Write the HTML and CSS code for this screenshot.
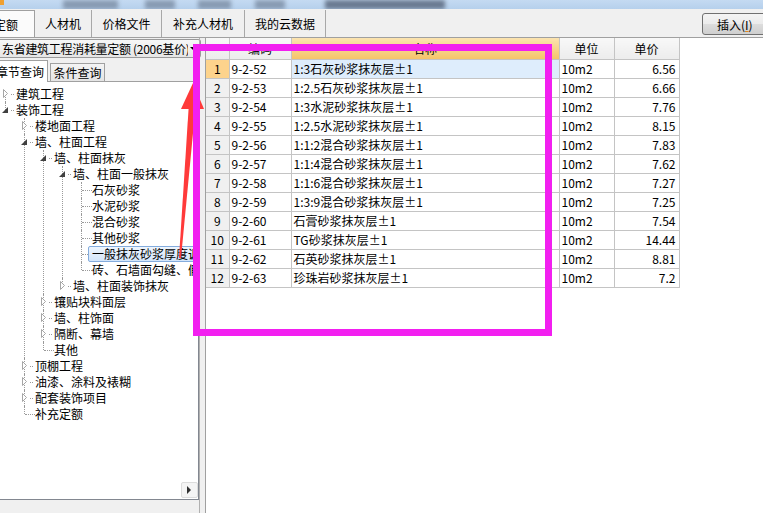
FILE: index.html
```html
<!DOCTYPE html>
<html lang="zh-CN">
<head>
  <meta charset="UTF-8">
  <title>定额查询</title>
  <link rel="stylesheet" href="styles.css">
</head>
<body>

  <div class="titlebar">
    <span class="app-icon"></span>
    <span class="blur b1"></span>
    <span class="blur b2"></span>
    <span class="blur b3"></span>
    <span class="blur b4"></span>
    <span class="blur b5"></span>
  </div>

  <div class="toolbar">
    <div class="tabs">
      <div class="tab active"><span class="cut">定额</span></div>
      <div class="tab w57">人材机</div>
      <div class="tab w70">价格文件</div>
      <div class="tab w83">补充人材机</div>
      <div class="tab w81">我的云数据</div>
    </div>
    <button class="insert-btn">插入(<u>I</u>)</button>
  </div>

  <div class="main">
    <div class="left">
      <div class="combo">
        <span class="combo-text">东省建筑工程消耗量定额 (2006基价)</span>
        <span class="combo-arrow"></span>
      </div>

      <div class="query-tabs">
        <div class="qtab active">章节查询</div>
        <div class="qtab">条件查询</div>
      </div>

      <div class="tree-box">
        <ul class="tree">
          <li><div class="node"><span class="twisty closed"></span><span class="dot"></span><span class="label">建筑工程</span></div></li>
          <li><div class="node"><span class="twisty open"></span><span class="dot"></span><span class="label">装饰工程</span></div>
            <ul>
              <li><div class="node"><span class="twisty closed"></span><span class="dot"></span><span class="label">楼地面工程</span></div></li>
              <li><div class="node"><span class="twisty open"></span><span class="dot"></span><span class="label">墙、柱面工程</span></div>
                <ul>
                  <li><div class="node"><span class="twisty open"></span><span class="dot"></span><span class="label">墙、柱面抹灰</span></div>
                    <ul>
                      <li><div class="node"><span class="twisty open"></span><span class="dot"></span><span class="label">墙、柱面一般抹灰</span></div>
                        <ul>
                          <li><div class="node leaf"><span class="hline"></span><span class="label">石灰砂浆</span></div></li>
                          <li><div class="node leaf"><span class="hline"></span><span class="label">水泥砂浆</span></div></li>
                          <li><div class="node leaf"><span class="hline"></span><span class="label">混合砂浆</span></div></li>
                          <li><div class="node leaf"><span class="hline"></span><span class="label">其他砂浆</span></div></li>
                          <li><div class="node leaf"><span class="hline"></span><span class="label selected">一般抹灰砂浆厚度调整</span></div></li>
                          <li><div class="node leaf"><span class="hline"></span><span class="label">砖、石墙面勾缝、假面砖</span></div></li>
                        </ul>
                      </li>
                      <li><div class="node"><span class="twisty closed"></span><span class="dot"></span><span class="label">墙、柱面装饰抹灰</span></div></li>
                    </ul>
                  </li>
                  <li><div class="node"><span class="twisty closed"></span><span class="dot"></span><span class="label">镶贴块料面层</span></div></li>
                  <li><div class="node"><span class="twisty closed"></span><span class="dot"></span><span class="label">墙、柱饰面</span></div></li>
                  <li><div class="node"><span class="twisty closed"></span><span class="dot"></span><span class="label">隔断、幕墙</span></div></li>
                  <li><div class="node leaf"><span class="hline"></span><span class="label">其他</span></div></li>
                </ul>
              </li>
              <li><div class="node"><span class="twisty closed"></span><span class="dot"></span><span class="label">顶棚工程</span></div></li>
              <li><div class="node"><span class="twisty closed"></span><span class="dot"></span><span class="label">油漆、涂料及裱糊</span></div></li>
              <li><div class="node"><span class="twisty closed"></span><span class="dot"></span><span class="label">配套装饰项目</span></div></li>
              <li><div class="node leaf"><span class="hline"></span><span class="label">补充定额</span></div></li>
            </ul>
          </li>
        </ul>
        <div class="hscroll"><span class="hscroll-btn"></span></div>
      </div>
    </div>

    <div class="splitter"></div>

    <div class="right">
      <table class="grid">
        <colgroup>
          <col class="c-no"><col class="c-code"><col class="c-name"><col class="c-unit"><col class="c-price">
        </colgroup>
        <thead>
          <tr><th></th><th>编码</th><th class="hl">名称</th><th>单位</th><th>单价</th></tr>
        </thead>
        <tbody>
          <tr class="current"><td class="no">1</td><td>9-2-52</td><td class="name">1:3石灰砂浆抹灰层±1</td><td>10m2</td><td class="num">6.56</td></tr>
          <tr><td class="no">2</td><td>9-2-53</td><td>1:2.5石灰砂浆抹灰层±1</td><td>10m2</td><td class="num">6.66</td></tr>
          <tr><td class="no">3</td><td>9-2-54</td><td>1:3水泥砂浆抹灰层±1</td><td>10m2</td><td class="num">7.76</td></tr>
          <tr><td class="no">4</td><td>9-2-55</td><td>1:2.5水泥砂浆抹灰层±1</td><td>10m2</td><td class="num">8.15</td></tr>
          <tr><td class="no">5</td><td>9-2-56</td><td>1:1:2混合砂浆抹灰层±1</td><td>10m2</td><td class="num">7.83</td></tr>
          <tr><td class="no">6</td><td>9-2-57</td><td>1:1:4混合砂浆抹灰层±1</td><td>10m2</td><td class="num">7.62</td></tr>
          <tr><td class="no">7</td><td>9-2-58</td><td>1:1:6混合砂浆抹灰层±1</td><td>10m2</td><td class="num">7.27</td></tr>
          <tr><td class="no">8</td><td>9-2-59</td><td>1:3:9混合砂浆抹灰层±1</td><td>10m2</td><td class="num">7.25</td></tr>
          <tr><td class="no">9</td><td>9-2-60</td><td>石膏砂浆抹灰层±1</td><td>10m2</td><td class="num">7.54</td></tr>
          <tr><td class="no">10</td><td>9-2-61</td><td>TG砂浆抹灰层±1</td><td>10m2</td><td class="num">14.44</td></tr>
          <tr><td class="no">11</td><td>9-2-62</td><td>石英砂浆抹灰层±1</td><td>10m2</td><td class="num">8.81</td></tr>
          <tr><td class="no">12</td><td>9-2-63</td><td>珍珠岩砂浆抹灰层±1</td><td>10m2</td><td class="num">7.2</td></tr>
        </tbody>
      </table>
    </div>
  </div>

  <!-- annotation drawn over the screenshot -->
  <svg class="markup" width="763" height="513" viewBox="0 0 763 513">
    <polygon points="189,102 196,102 181,258 179,258" fill="#ff3a3a"/>
    <polygon points="193,83 181,109 204,109" fill="#ff3a3a"/>
    <rect x="196.5" y="47.5" width="352" height="285" fill="none" stroke="#f21ff0" stroke-width="7"/>
  </svg>

</body>
</html>
```

FILE: styles.css
```css
* {
  margin: 0;
  padding: 0;
  box-sizing: border-box;
}

body {
  position: relative;
  width: 763px;
  height: 513px;
  overflow: hidden;
  background-color: #f0f0f0;
  font-family: "Noto Sans CJK SC", "Liberation Sans", sans-serif;
  font-size: 12px;
  color: #000;
}

/* window caption, blurred */
.titlebar {
  display: flex;
  height: 9px;
  background: linear-gradient(#c4daf2, #b6d0ec);
  overflow: hidden;
}

.app-icon {
  width: 4px;
  height: 5px;
  background-color: #f0a030;
}

.blur {
  height: 9px;
  background-color: rgba(70, 85, 105, 0.45);
  filter: blur(2px);
}

.b1 { width: 55px; margin-left: 59px; }
.b2 { width: 30px; margin-left: 27px; }
.b3 { width: 33px; margin-left: 23px; }
.b4 { width: 30px; margin-left: 24px; }
.b5 { width: 120px; margin-left: 40px; background-color: rgba(50, 60, 80, 0.6); }

/* tab strip */
.toolbar {
  display: flex;
  justify-content: space-between;
  height: 29px;
  padding-top: 1px;
  border-bottom: 1px solid #a0a0a0;
}

.tabs {
  display: flex;
}

.tab {
  display: flex;
  align-items: center;
  justify-content: center;
  height: 27px;
  border-right: 1px solid #a8a8a8;
  white-space: nowrap;
  font-size: 12px;
}

.tab.active {
  width: 35px;
  justify-content: flex-start;
  overflow: hidden;
  background-color: #fbfbfb;
  border: 1px solid #a0a0a0;
  border-left: none;
  border-bottom: none;
}

.tab .cut {
  margin-left: -6px;
}

.w57 { width: 57px; }
.w70 { width: 70px; }
.w83 { width: 83px; }
.w81 { width: 81px; }

.insert-btn {
  width: 64px;
  height: 22px;
  margin-top: 3px;
  margin-right: -3px;
  padding-left: 14px;
  text-align: left;
  border: 1px solid #707070;
  border-radius: 3px;
  background: linear-gradient(#f4f4f4 0%, #ebebeb 50%, #dddddd 51%, #cfcfcf 100%);
  font-family: inherit;
  font-size: 12px;
  color: #000;
}

.insert-btn u {
  text-decoration-color: #e08a20;
}

/* body */
.main {
  display: flex;
  height: 475px;
}

.left {
  display: flex;
  flex-direction: column;
  width: 199px;
  flex: none;
  padding-bottom: 13px;
}

.combo {
  display: flex;
  align-items: center;
  justify-content: space-between;
  height: 19px;
  margin-top: 1px;
  margin-right: -2px;
  padding: 0 4px 0 2px;
  border: 1px solid #9a9a9a;
  border-left: none;
  border-radius: 0 3px 3px 0;
  background: linear-gradient(#f7f7f7, #e6e6e6);
  overflow: hidden;
}

.combo-text {
  white-space: nowrap;
  overflow: hidden;
  letter-spacing: -0.3px;
}

.combo-arrow {
  flex: none;
  width: 0;
  height: 0;
  margin-left: 2px;
  border-left: 3px solid transparent;
  border-right: 3px solid transparent;
  border-top: 3px solid #000;
}

.query-tabs {
  display: flex;
  align-items: flex-end;
  height: 22px;
  margin-top: 1px;
}

.qtab {
  display: flex;
  align-items: center;
  justify-content: center;
  height: 18px;
  width: 55px;
  margin-left: 2px;
  border: 1px solid #a0a0a0;
  border-bottom: none;
  background: linear-gradient(#f4f4f4, #e4e4e4);
  white-space: nowrap;
}

.qtab.active {
  width: 56px;
  height: 22px;
  margin-left: -8px;
  margin-bottom: -1px;
  background-color: #fff;
  background-image: none;
  position: relative;
  align-items: flex-start;
  padding-top: 2px;
}

.tree-box {
  display: flex;
  flex-direction: column;
  flex: 1;
  background-color: #fff;
  border-top: 1px solid #a0a0a0;
  border-right: 1px solid #828790;
  border-bottom: 1px solid #828790;
  overflow: hidden;
}

.tree {
  flex: 1;
  padding-top: 4px;
  overflow: hidden;
}

.tree,
.tree ul {
  list-style: none;
}

.tree ul {
  padding-left: 19px;
}

.tree li {
  position: relative;
}

.tree li::before {
  content: "";
  position: absolute;
  left: 5px;
  top: 0;
  bottom: 0;
  border-left: 1px dotted #9a9a9a;
}

.tree li:last-child::before {
  bottom: auto;
  height: 8px;
}

.tree > li:first-child::before {
  top: 8px;
}

.node {
  position: relative;
  display: flex;
  align-items: center;
  height: 16px;
  white-space: nowrap;
}

.twisty {
  position: relative;
  z-index: 1;
  flex: none;
  width: 11px;
  height: 16px;
  background-repeat: no-repeat;
}

.twisty.closed {
  background-image: url("data:image/svg+xml,%3Csvg xmlns='http://www.w3.org/2000/svg' width='11' height='16'%3E%3Cpath d='M3.5 3.5 L7.5 7.5 L3.5 11.5 Z' fill='%23fff' stroke='%23a6a6a6'/%3E%3C/svg%3E");
}

.twisty.open {
  background-image: url("data:image/svg+xml,%3Csvg xmlns='http://www.w3.org/2000/svg' width='11' height='16'%3E%3Cpath d='M8 5 L8 11 L2 11 Z' fill='%23404040'/%3E%3C/svg%3E");
}

.dot {
  flex: none;
  width: 3px;
  margin-right: 2px;
  border-top: 1px dotted #9a9a9a;
}

.hline {
  flex: none;
  width: 10px;
  margin-left: 6px;
  border-top: 1px dotted #9a9a9a;
}

.label {
  line-height: 16px;
}

.label.selected {
  margin-left: -4px;
  padding: 0 3px;
  border: 1px solid #84acdd;
  border-radius: 2px;
  background: linear-gradient(#eef5fd, #d3e5fa);
  line-height: 14px;
}

.hscroll {
  display: flex;
  justify-content: flex-end;
  height: 17px;
  background-color: #fff;
}

.hscroll-btn {
  width: 17px;
  height: 16px;
  border: 1px solid #dcdcdc;
  border-radius: 2px;
  background: #f4f4f4 url("data:image/svg+xml,%3Csvg xmlns='http://www.w3.org/2000/svg' width='15' height='14'%3E%3Cpath d='M5 3 L9 7 L5 11 Z' fill='%23303030'/%3E%3C/svg%3E") no-repeat;
}

.splitter {
  width: 6px;
  flex: none;
  border-left: 1px solid #b0b0b0;
}

.right {
  flex: 1;
  background-color: #fff;
  border-left: 1px solid #a0a0a0;
}

/* data grid */
.grid {
  table-layout: fixed;
  border-collapse: collapse;
  width: 473px;
}

.c-no { width: 23px; }
.c-code { width: 62px; }
.c-name { width: 268px; }
.c-unit { width: 55px; }
.c-price { width: 65px; }

.grid th {
  height: 21px;
  padding: 0;
  border: 1px solid #c4c4c4;
  border-top: none;
  background: linear-gradient(#f8f8f8, #ececec);
  font-weight: normal;
  font-size: 12px;
  text-align: center;
}

.grid th:first-child {
  border-left: none;
}

.grid th.hl {
  background: linear-gradient(#fbe3b0, #f5c46a);
}

.grid td {
  height: 19px;
  padding: 0 0 0 2px;
  border: 1px solid #c4c4c4;
  line-height: 17px;
  white-space: nowrap;
  overflow: hidden;
}

.grid td.no {
  padding: 0;
  border-left: none;
  text-align: center;
  background-color: #f0f0f0;
}

.grid td.num {
  padding: 0 3px 0 0;
  text-align: right;
}

.grid tr.current td.no {
  background-color: #fdd38c;
}

.grid tr.current td.name {
  background-color: #deedfc;
}

.markup {
  position: absolute;
  left: 0;
  top: 0;
  pointer-events: none;
}
```
